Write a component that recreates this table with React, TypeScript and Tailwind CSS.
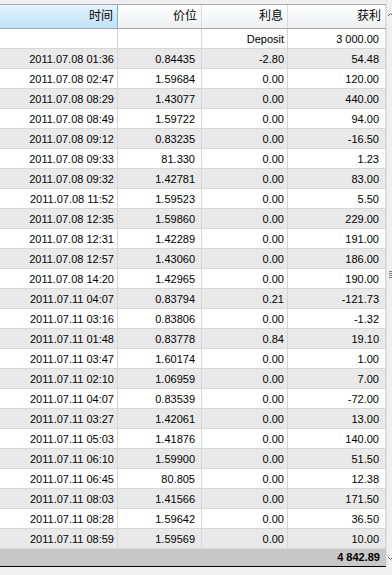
import React from "react";

const rows: [string, string, string, string][] = [
  ["2011.07.08 01:36", "0.84435", "-2.80", "54.48"],
  ["2011.07.08 02:47", "1.59684", "0.00", "120.00"],
  ["2011.07.08 08:29", "1.43077", "0.00", "440.00"],
  ["2011.07.08 08:49", "1.59722", "0.00", "94.00"],
  ["2011.07.08 09:12", "0.83235", "0.00", "-16.50"],
  ["2011.07.08 09:33", "81.330", "0.00", "1.23"],
  ["2011.07.08 09:32", "1.42781", "0.00", "83.00"],
  ["2011.07.08 11:52", "1.59523", "0.00", "5.50"],
  ["2011.07.08 12:35", "1.59860", "0.00", "229.00"],
  ["2011.07.08 12:31", "1.42289", "0.00", "191.00"],
  ["2011.07.08 12:57", "1.43060", "0.00", "186.00"],
  ["2011.07.08 14:20", "1.42965", "0.00", "190.00"],
  ["2011.07.11 04:07", "0.83794", "0.21", "-121.73"],
  ["2011.07.11 03:16", "0.83806", "0.00", "-1.32"],
  ["2011.07.11 01:48", "0.83778", "0.84", "19.10"],
  ["2011.07.11 03:47", "1.60174", "0.00", "1.00"],
  ["2011.07.11 02:10", "1.06959", "0.00", "7.00"],
  ["2011.07.11 04:07", "0.83539", "0.00", "-72.00"],
  ["2011.07.11 03:27", "1.42061", "0.00", "13.00"],
  ["2011.07.11 05:03", "1.41876", "0.00", "140.00"],
  ["2011.07.11 06:10", "1.59900", "0.00", "51.50"],
  ["2011.07.11 06:45", "80.805", "0.00", "12.38"],
  ["2011.07.11 08:03", "1.41566", "0.00", "171.50"],
  ["2011.07.11 08:28", "1.59642", "0.00", "36.50"],
  ["2011.07.11 08:59", "1.59569", "0.00", "10.00"],
];

const grid = "grid grid-cols-[118px_84px_86px_98px]";
const cell = "border-r border-[#d6d6d6] text-right pr-[3px] leading-[20px] whitespace-nowrap overflow-hidden";

export default function App() {
  return (
    <div
      className="w-[392px] h-[575px] bg-[#f0f0f0] overflow-hidden flex text-[11px] text-black"
      style={{ fontFamily: '"Liberation Sans", "Noto Sans CJK SC", sans-serif' }}
    >
      <div className="w-[386px] flex flex-col">
        <div className="h-[4px] bg-[#f0f0f0]" />
        <div className={`${grid} h-[25px] border-t border-b border-[#a8a8a8] bg-gradient-to-b from-[#ffffff] to-[#eef0f2]`}>
          <div className="border-r border-[#6fb6df] bg-gradient-to-b from-[#e4f4fc] to-[#bde3f8] text-right pr-[4px] leading-[23px] text-[12px]">时间</div>
          <div className="border-r border-[#dcdcdc] border-l border-l-white text-right pr-[4px] leading-[23px] text-[12px]">价位</div>
          <div className="border-r border-[#dcdcdc] text-right pr-[4px] leading-[23px] text-[12px]">利息</div>
          <div className="border-r border-[#dcdcdc] text-right pr-[4px] leading-[23px] text-[12px]">获利</div>
        </div>
        <div className="bg-white">
          <div className={`${grid} h-[20px] border-b border-[#d6d6d6] bg-white`}>
            <div className={cell}></div>
            <div className={cell}></div>
            <div className={cell}>Deposit</div>
            <div className={`${cell} pr-[6px]`}>3 000.00</div>
          </div>
          {rows.map((r, i) => (
            <div
              key={i}
              className={`${grid} h-[20px] border-b border-[#d6d6d6] ${i % 2 === 0 ? "bg-[#e9e9e9]" : "bg-white"}`}
            >
              <div className={cell}>{r[0]}</div>
              <div className={`${cell} pr-[6px]`}>{r[1]}</div>
              <div className={cell}>{r[2]}</div>
              <div className={`${cell} pr-[6px]`}>{r[3]}</div>
            </div>
          ))}
        </div>
        <div className={`${grid} h-[17px] bg-[#c8c8c8]`}>
          <div />
          <div />
          <div />
          <div className="text-right pr-[6px] leading-[17px] font-bold">4 842.89</div>
        </div>
        <div className="h-[1px] bg-black" />
        <div className="flex-1 bg-[#f0f0f0]" />
      </div>
      <div className="w-[6px] h-[566px] bg-[#f0f0f0] border-l border-[#e0e0e0] relative">
        <svg className="absolute left-[1px] top-[13px]" width="5" height="4" viewBox="0 0 5 4">
          <path d="M0 3 L2.5 0.5 L5 3" stroke="#606060" strokeWidth="1" fill="none" />
        </svg>
        <div className="absolute left-[2px] top-[271px] flex flex-col gap-[1px]">
          <div className="w-[3px] h-[1px] bg-[#808080]" />
          <div className="w-[3px] h-[1px] bg-[#808080]" />
          <div className="w-[3px] h-[1px] bg-[#808080]" />
          <div className="w-[3px] h-[1px] bg-[#808080]" />
        </div>
        <svg className="absolute left-[1px] top-[556px]" width="5" height="4" viewBox="0 0 5 4">
          <path d="M0 1 L2.5 3.5 L5 1" stroke="#606060" strokeWidth="1" fill="none" />
        </svg>
      </div>
    </div>
  );
}
